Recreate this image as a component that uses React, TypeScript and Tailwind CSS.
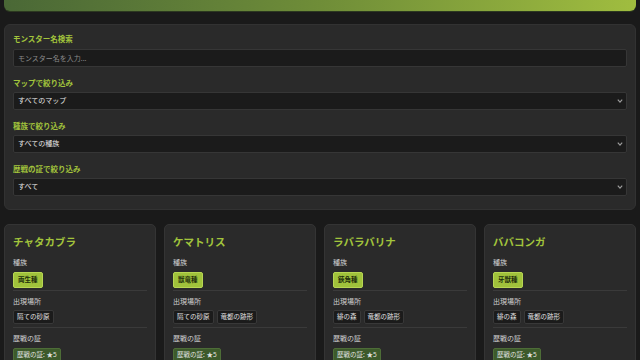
import { useState } from 'react'

interface Monster {
  nom: string
  espece: string
  lieux: string[]
  rekisen: string
}

const MONSTERS: Monster[] = [
  { nom: 'チャタカブラ', espece: '両生種', lieux: ['隔ての砂原'], rekisen: '歴戦の証: ★5' },
  { nom: 'ケマトリス', espece: '獣竜種', lieux: ['隔ての砂原', '竜都の跡形'], rekisen: '歴戦の証: ★5' },
  { nom: 'ラバラバリナ', espece: '鋏角種', lieux: ['緋の森', '竜都の跡形'], rekisen: '歴戦の証: ★5' },
  { nom: 'ババコンガ', espece: '牙獣種', lieux: ['緋の森', '竜都の跡形'], rekisen: '歴戦の証: ★5' },
]

const FONT = "font-['Noto_Sans','Noto_Sans_CJK_JP',sans-serif]"

function Chevron() {
  return (
    <svg
      className="pointer-events-none absolute right-[4px] top-1/2 -translate-y-1/2"
      width="6"
      height="5"
      viewBox="0 0 6 5"
      fill="none"
    >
      <path d="M0.8 1.2 L3 3.6 L5.2 1.2" stroke="#9a9a9a" strokeWidth="1.2" />
    </svg>
  )
}

function Filtre({ label, options }: { label: string; options: string[] }) {
  const [val, setVal] = useState(options[0])
  return (
    <div className="mb-[11px]">
      <label className="mb-[4px] block text-[7.5px] font-bold leading-[10px] text-[#a2c43c]">{label}</label>
      <div className="relative">
        <select
          value={val}
          onChange={(e) => setVal(e.target.value)}
          className="block h-[18px] w-full appearance-none rounded-[2px] border border-[#363636] bg-[#1b1b1b] pl-[4px] text-[7px] leading-[16px] text-[#e6e6e6] outline-none"
        >
          {options.map((o) => (
            <option key={o}>{o}</option>
          ))}
        </select>
        <Chevron />
      </div>
    </div>
  )
}

function Carte({ m }: { m: Monster }) {
  return (
    <div className="rounded-[5px] border border-[#343434] bg-[#2a2a2a] px-[8px] pt-[10px] pb-[6px]">
      <h2 className="mb-[9px] text-[10.5px] font-bold leading-[14px] text-[#a2c43c]">{m.nom}</h2>

      <div className="border-b border-[#3a3a3a] pb-[2px]">
        <p className="mb-[4px] text-[7px] leading-[10px] text-[#d2d2d2]">種族</p>
        <div className="flex">
          <span className="rounded-[2px] border border-[#b8d653] bg-[#a0c23b] px-[4px] py-[2px] text-[6.5px] font-bold leading-[10px] text-[#22300c]">
            {m.espece}
          </span>
        </div>
      </div>

      <div className="border-b border-[#3a3a3a] pt-[6px] pb-[3px]">
        <p className="mb-[3px] text-[7px] leading-[10px] text-[#d2d2d2]">出現場所</p>
        <div className="flex gap-[3px]">
          {m.lieux.map((l) => (
            <span
              key={l}
              className="rounded-[2px] border border-[#383838] bg-[#1b1b1b] px-[3px] py-[1px] text-[6.5px] leading-[10px] text-[#e2e2e2]"
            >
              {l}
            </span>
          ))}
        </div>
      </div>

      <div className="pt-[6px]">
        <p className="mb-[4px] text-[7px] leading-[10px] text-[#d2d2d2]">歴戦の証</p>
        <div className="flex">
          <span className="rounded-[2px] border border-[#4d6d37] bg-[#3d5a2b] px-[3px] py-[1px] text-[6.5px] leading-[10px] text-[#e2e2e2]">
            {m.rekisen}
          </span>
        </div>
      </div>
    </div>
  )
}

export default function App() {
  const [recherche, setRecherche] = useState('')

  return (
    <div className={`min-h-screen overflow-hidden bg-[#1a1a1a] px-[4px] text-[7px] leading-[10px] ${FONT}`}>

      {/* Header (défilé, seul le bas est visible) */}
      <header className="mt-[-49px] flex h-[60px] flex-col items-center justify-end rounded-b-[6px] bg-gradient-to-r from-[#4a6836] via-[#6f8d38] to-[#a0bd3f] pb-[10px] shadow-[0_1px_0_#2c3820]">
        <h1 className="text-[14px] font-bold leading-[18px] text-white">モンスターハンターワイルズ</h1>
        <p className="text-[7px] leading-[10px] text-[#dfe9c8]">歴戦の証 一覧</p>
      </header>

      {/* Filtres */}
      <div className="mt-[13px] rounded-[6px] border border-[#323232] bg-[#2a2a2a] px-[8px] pt-[9px] pb-[2px]">
        <div className="mb-[11px]">
          <label className="mb-[5px] block text-[7.5px] font-bold leading-[10px] text-[#a2c43c]">モンスター名検索</label>
          <input
            value={recherche}
            onChange={(e) => setRecherche(e.target.value)}
            placeholder="モンスター名を入力..."
            className="block h-[18px] w-full rounded-[2px] border border-[#363636] bg-[#1b1b1b] px-[4px] text-[7px] text-[#e6e6e6] outline-none placeholder:text-[#8a8a8a]"
          />
        </div>
        <Filtre label="マップで絞り込み" options={['すべてのマップ', '隔ての砂原', '緋の森', '竜都の跡形']} />
        <Filtre label="種族で絞り込み" options={['すべての種族', '両生種', '獣竜種', '鋏角種', '牙獣種']} />
        <Filtre label="歴戦の証で絞り込み" options={['すべて', '★5']} />
      </div>

      {/* Cartes */}
      <div className="mt-[14px] grid grid-cols-4 gap-[8px]">
        {MONSTERS.map((m) => (
          <Carte key={m.nom} m={m} />
        ))}
      </div>
    </div>
  )
}
